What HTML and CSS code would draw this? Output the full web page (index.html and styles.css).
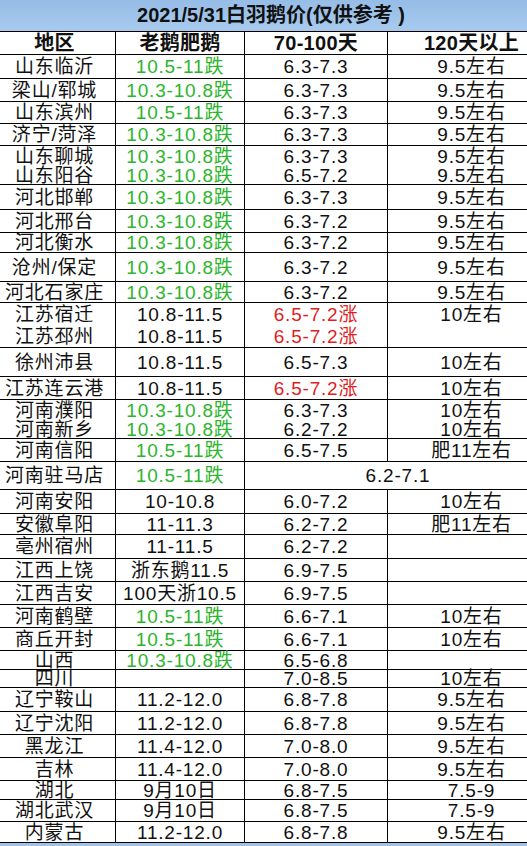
FILE: index.html
```html
<!DOCTYPE html>
<html lang="zh">
<head>
<meta charset="utf-8">
<title>2021/5/31白羽鹅价</title>
<link rel="stylesheet" href="styles.css">
</head>
<body>
<div class="sheet">
  <div class="title">2021/5/31白羽鹅价(仅供参考 )</div>
  <div class="grid">
    <div class="c b">地区</div><div class="c b">老鹅肥鹅</div><div class="c b">70-100天</div><div class="c b c4">120天以上</div>

    <div class="c">山东临沂</div><div class="c g">10.5-11跌</div><div class="c">6.3-7.3</div><div class="c c4">9.5左右</div>
    <div class="c">梁山/郓城</div><div class="c g">10.3-10.8跌</div><div class="c">6.3-7.3</div><div class="c c4">9.5左右</div>
    <div class="c">山东滨州</div><div class="c g">10.5-11跌</div><div class="c">6.3-7.3</div><div class="c c4">9.5左右</div>
    <div class="c">济宁/菏泽</div><div class="c g">10.3-10.8跌</div><div class="c">6.3-7.3</div><div class="c c4">9.5左右</div>
    <div class="c nb">山东聊城</div><div class="c g nb">10.3-10.8跌</div><div class="c nb">6.3-7.3</div><div class="c c4 nb">9.5左右</div>
    <div class="c">山东阳谷</div><div class="c g">10.3-10.8跌</div><div class="c">6.5-7.2</div><div class="c c4">9.5左右</div>
    <div class="c">河北邯郸</div><div class="c g">10.3-10.8跌</div><div class="c">6.3-7.3</div><div class="c c4">9.5左右</div>
    <div class="c">河北邢台</div><div class="c g">10.3-10.8跌</div><div class="c">6.3-7.2</div><div class="c c4">9.5左右</div>
    <div class="c">河北衡水</div><div class="c g">10.3-10.8跌</div><div class="c">6.3-7.2</div><div class="c c4">9.5左右</div>
    <div class="c">沧州/保定</div><div class="c g">10.3-10.8跌</div><div class="c">6.3-7.2</div><div class="c c4">9.5左右</div>
    <div class="c">河北石家庄</div><div class="c g">10.3-10.8跌</div><div class="c">6.3-7.2</div><div class="c c4">9.5左右</div>
    <div class="c nb">江苏宿迁</div><div class="c nb">10.8-11.5</div><div class="c r nb">6.5-7.2涨</div><div class="c c4 nb">10左右</div>
    <div class="c">江苏邳州</div><div class="c">10.8-11.5</div><div class="c r">6.5-7.2涨</div><div class="c c4"></div>
    <div class="c">徐州沛县</div><div class="c">10.8-11.5</div><div class="c">6.5-7.3</div><div class="c c4">10左右</div>
    <div class="c">江苏连云港</div><div class="c">10.8-11.5</div><div class="c r">6.5-7.2涨</div><div class="c c4">10左右</div>
    <div class="c nb">河南濮阳</div><div class="c g nb">10.3-10.8跌</div><div class="c nb">6.3-7.3</div><div class="c c4 nb">10左右</div>
    <div class="c">河南新乡</div><div class="c g">10.3-10.8跌</div><div class="c">6.2-7.2</div><div class="c c4">10左右</div>
    <div class="c">河南信阳</div><div class="c g">10.5-11跌</div><div class="c">6.5-7.5</div><div class="c c4">肥11左右</div>
    <div class="c">河南驻马店</div><div class="c g">10.5-11跌</div><div class="c span2">6.2-7.1</div>
    <div class="c">河南安阳</div><div class="c">10-10.8</div><div class="c">6.0-7.2</div><div class="c c4">10左右</div>
    <div class="c">安徽阜阳</div><div class="c">11-11.3</div><div class="c">6.2-7.2</div><div class="c c4">肥11左右</div>
    <div class="c">亳州宿州</div><div class="c">11-11.5</div><div class="c">6.2-7.2</div><div class="c c4"></div>
    <div class="c">江西上饶</div><div class="c">浙东鹅11.5</div><div class="c">6.9-7.5</div><div class="c c4"></div>
    <div class="c">江西吉安</div><div class="c">100天浙10.5</div><div class="c">6.9-7.5</div><div class="c c4"></div>
    <div class="c">河南鹤壁</div><div class="c g">10.5-11跌</div><div class="c">6.6-7.1</div><div class="c c4">10左右</div>
    <div class="c">商丘开封</div><div class="c g">10.5-11跌</div><div class="c">6.6-7.1</div><div class="c c4">10左右</div>
    <div class="c">山西</div><div class="c g">10.3-10.8跌</div><div class="c">6.5-6.8</div><div class="c c4"></div>
    <div class="c">四川</div><div class="c"></div><div class="c">7.0-8.5</div><div class="c c4">10左右</div>
    <div class="c">辽宁鞍山</div><div class="c">11.2-12.0</div><div class="c">6.8-7.8</div><div class="c c4">9.5左右</div>
    <div class="c">辽宁沈阳</div><div class="c">11.2-12.0</div><div class="c">6.8-7.8</div><div class="c c4">9.5左右</div>
    <div class="c">黑龙江</div><div class="c">11.4-12.0</div><div class="c">7.0-8.0</div><div class="c c4">9.5左右</div>
    <div class="c">吉林</div><div class="c">11.4-12.0</div><div class="c">7.0-8.0</div><div class="c c4">9.5左右</div>
    <div class="c">湖北</div><div class="c">9月10日</div><div class="c">6.8-7.5</div><div class="c c4">7.5-9</div>
    <div class="c">湖北武汉</div><div class="c">9月10日</div><div class="c">6.8-7.5</div><div class="c c4">7.5-9</div>
    <div class="c">内蒙古</div><div class="c">11.2-12.0</div><div class="c">6.8-7.8</div><div class="c c4">9.5左右</div>
  </div>
  <div class="foot"></div>
</div>
</body>
</html>
```
FILE: styles.css
```css
html, body {
  margin: 0;
  padding: 0;
  background: #ffffff;
}
body {
  width: 527px;
  height: 846px;
  overflow: hidden;
  font-family: "Liberation Sans", "Noto Sans CJK SC", sans-serif;
  color: #111;
}
.sheet {
  margin-left: -6px;
  width: 546px;
}
.title {
  height: 32px;
  box-sizing: border-box;
  border-bottom: 1px solid #000;
  background: linear-gradient(#96bde7, #a8caee);
  font-weight: bold;
  font-size: 20px;
  line-height: 31px;
  text-align: center;
  padding-left: 8px;
}
.grid {
  display: grid;
  grid-template-columns: 122px 129px 143px 152px;
  grid-template-rows: 23px 24px 23px 22px 22px 20px 19px 25px 23px 20px 29px 21px 23px 22px 29px 23px 20px 19px 23px 28px 24px 21px 24px 23px 23px 23px 23px 19px 18px 24px 23px 23px 23px 19px 22px 21px;
}
.c {
  box-sizing: border-box;
  border-right: 1px solid #000;
  border-bottom: 1px solid #000;
  font-size: 19px;
  letter-spacing: 0.8px;
  line-height: 1;
  display: flex;
  align-items: center;
  justify-content: center;
  white-space: nowrap;
  overflow: visible;
}
.c.nb {
  border-bottom: none;
}
.c4 {
  padding-left: 16px;
}
.span2 {
  grid-column: span 2;
  padding-left: 12px;
}
.b {
  font-weight: bold;
  font-size: 20px;
  letter-spacing: 0.3px;
}
.g {
  color: #2cb52c;
}
.r {
  color: #e01e1e;
}
.foot {
  height: 3px;
  background: #9ec2e8;
}
```
